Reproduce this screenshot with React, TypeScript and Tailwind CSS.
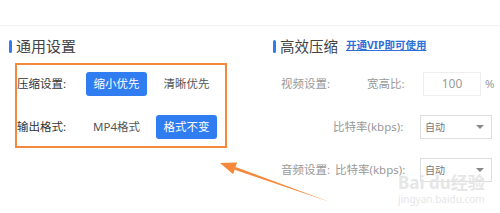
import React from 'react';

const font = { fontFamily: '"Noto Sans", "Noto Sans CJK SC", sans-serif' };

function Option({ label, active }: { label: string; active?: boolean }) {
  return (
    <div
      className={
        'w-[61px] h-[24px] flex items-center justify-center rounded-[3px] text-[11.5px] ' +
        (active ? 'bg-[#2f7df0] text-white' : 'text-[#555]')
      }
    >
      {label}
    </div>
  );
}

function Select({ value }: { value: string }) {
  return (
    <div className="w-[72px] h-[24px] border border-[#dedede] flex items-center justify-between pl-[4px] pr-[7px] text-[10px] text-[#777]">
      <span>{value}</span>
      <span className="w-0 h-0 border-l-[4px] border-r-[4px] border-t-[4px] border-l-transparent border-r-transparent border-t-[#888]" />
    </div>
  );
}

export default function App() {
  return (
    <div className="relative w-[500px] h-[213px] bg-white overflow-hidden" style={font}>
      <div className="h-[26px] border-b border-[#f0f0f0]" />
      <div className="flex">
        {/* 通用设置 */}
        <div className="w-[273px] pl-[9px] pt-[12px]">
          <div className="flex items-center h-[16px] gap-[4px]">
            <span className="w-[3px] h-[13px] rounded-full bg-[#2f7df0]" />
            <span className="text-[15px] leading-[16px] text-[#444]">通用设置</span>
          </div>
          <div className="mt-[9px] ml-[6px] w-[212px] border-2 border-[#f5883a] pt-[7px] pb-[7px] flex flex-col gap-[19px]">
            <div className="flex items-center h-[24px]">
              <span className="w-[69px] text-[11.5px] text-[#333]">压缩设置:</span>
              <Option label="缩小优先" active />
              <div className="ml-[9px]">
                <Option label="清晰优先" />
              </div>
            </div>
            <div className="flex items-center h-[24px]">
              <span className="w-[69px] text-[11.5px] text-[#333]">输出格式:</span>
              <Option label="MP4格式" />
              <div className="ml-[9px]">
                <Option label="格式不变" active />
              </div>
            </div>
          </div>
        </div>

        {/* 高效压缩 */}
        <div className="flex-1 pt-[12px]">
          <div className="flex items-center h-[16px] gap-[4px]">
            <span className="w-[3px] h-[13px] rounded-full bg-[#2f7df0]" />
            <span className="text-[14.5px] leading-[16px] text-[#444]">高效压缩</span>
            <span className="ml-[4px] text-[10.5px] font-bold text-[#2f6fd8] underline">开通VIP即可使用</span>
          </div>
          <div className="mt-[18px] pl-[8px] flex flex-col gap-[19px] text-[11.5px] text-[#999]">
            <div className="flex items-center h-[24px]">
              <span className="w-[86px]">视频设置:</span>
              <span className="w-[56px]">宽高比:</span>
              <div className="w-[58px] h-[24px] border border-[#eeeeee] flex items-center justify-center text-[12px] text-[#999]">
                100
              </div>
              <span className="ml-[4px]">%</span>
            </div>
            <div className="flex items-center h-[24px]">
              <span className="w-[52px]" />
              <span className="w-[87px]">比特率(kbps):</span>
              <Select value="自动" />
            </div>
            <div className="flex items-center h-[24px]">
              <span className="w-[54px]">音频设置:</span>
              <span className="w-[85px]">比特率(kbps):</span>
              <Select value="自动" />
            </div>
          </div>
        </div>
      </div>

      {/* watermark */}
      <div className="absolute left-[398px] top-[174px] flex flex-col items-center text-[#e6e6e6] leading-none">
        <span className="text-[17px] font-bold">Bai du经验</span>
        <span className="mt-[3px] text-[10px]">jingyan.baidu.com</span>
      </div>

      {/* arrow */}
      <svg className="absolute left-0 top-0" width="500" height="213">
        <polygon points="330,202 235.6,166.9 234.6,169.7" fill="#f5883a" />
        <polygon points="220,163 237.1,162.4 233.1,174.3" fill="#f5883a" />
      </svg>
    </div>
  );
}
